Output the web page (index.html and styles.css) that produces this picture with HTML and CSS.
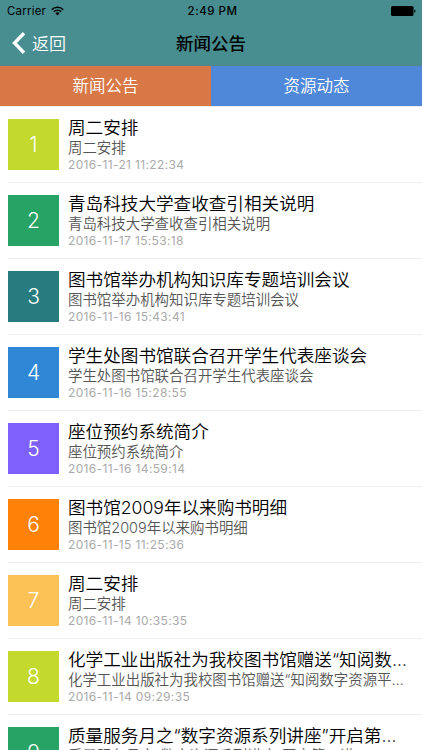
FILE: index.html
```html
<!DOCTYPE html>
<html lang="zh-CN">
  <head>
    <meta charset="UTF-8" />
    <title>新闻公告</title>
    <link rel="stylesheet" href="styles.css">
  </head>
  <body>
    <header class="header">
      <div class="status">
        <div class="status__carrier">
          Carrier
          <svg class="status__wifi" width="13" height="10" viewBox="0 0 13 10" fill="none" stroke="#000" stroke-width="1.5">
            <path d="M0.7 3.7a8.2 8.2 0 0 1 11.6 0" />
            <path d="M2.7 5.8a5.4 5.4 0 0 1 7.6 0" />
            <path d="M6.5 9.4L4.4 7.3a3 3 0 0 1 4.2 0z" fill="#000" stroke="none" />
          </svg>
        </div>
        <div class="status__time">2:49 PM</div>
        <svg class="status__battery" width="25" height="10" viewBox="0 0 25 10">
          <rect x="0" y="0" width="22.5" height="10" rx="1.5" />
          <path d="M23.3 3.2a1.9 1.9 0 0 1 0 3.6z" />
        </svg>
      </div>
      <div class="nav">
        <a class="nav__back" href="#">
          <svg width="14" height="22" viewBox="0 0 14 22" fill="none" stroke="#fff" stroke-width="3.4">
            <path d="M12 1.3L2.5 11L12 20.7" />
          </svg>
          <span class="nav__label">返回</span>
        </a>
        <h1 class="nav__title">新闻公告</h1>
      </div>
    </header>

    <div class="tabs">
      <a class="tabs__item tabs__item--active" href="#">新闻公告</a>
      <a class="tabs__item" href="#">资源动态</a>
    </div>

    <ul class="news">
      <li class="news__item">
        <div class="news__number news__number--lime">1</div>
        <div class="news__body">
          <div class="news__title">周二安排</div>
          <div class="news__text">周二安排</div>
          <div class="news__date">2016-11-21 11:22:34</div>
        </div>
      </li>
      <li class="news__item">
        <div class="news__number news__number--green">2</div>
        <div class="news__body">
          <div class="news__title">青岛科技大学查收查引相关说明</div>
          <div class="news__text">青岛科技大学查收查引相关说明</div>
          <div class="news__date">2016-11-17 15:53:18</div>
        </div>
      </li>
      <li class="news__item">
        <div class="news__number news__number--teal">3</div>
        <div class="news__body">
          <div class="news__title">图书馆举办机构知识库专题培训会议</div>
          <div class="news__text">图书馆举办机构知识库专题培训会议</div>
          <div class="news__date">2016-11-16 15:43:41</div>
        </div>
      </li>
      <li class="news__item">
        <div class="news__number news__number--blue">4</div>
        <div class="news__body">
          <div class="news__title">学生处图书馆联合召开学生代表座谈会</div>
          <div class="news__text">学生处图书馆联合召开学生代表座谈会</div>
          <div class="news__date">2016-11-16 15:28:55</div>
        </div>
      </li>
      <li class="news__item">
        <div class="news__number news__number--purple">5</div>
        <div class="news__body">
          <div class="news__title">座位预约系统简介</div>
          <div class="news__text">座位预约系统简介</div>
          <div class="news__date">2016-11-16 14:59:14</div>
        </div>
      </li>
      <li class="news__item">
        <div class="news__number news__number--orange">6</div>
        <div class="news__body">
          <div class="news__title">图书馆2009年以来购书明细</div>
          <div class="news__text">图书馆2009年以来购书明细</div>
          <div class="news__date">2016-11-15 11:25:36</div>
        </div>
      </li>
      <li class="news__item">
        <div class="news__number news__number--yellow">7</div>
        <div class="news__body">
          <div class="news__title">周二安排</div>
          <div class="news__text">周二安排</div>
          <div class="news__date">2016-11-14 10:35:35</div>
        </div>
      </li>
      <li class="news__item">
        <div class="news__number news__number--lime">8</div>
        <div class="news__body">
          <div class="news__title">化学工业出版社为我校图书馆赠送“知阅数字资源平台”账号</div>
          <div class="news__text">化学工业出版社为我校图书馆赠送“知阅数字资源平台”账号</div>
          <div class="news__date">2016-11-14 09:29:35</div>
        </div>
      </li>
      <li class="news__item">
        <div class="news__number news__number--green">9</div>
        <div class="news__body">
          <div class="news__title">质量服务月之“数字资源系列讲座”开启第一讲</div>
          <div class="news__text">质量服务月之“数字资源系列讲座”开启第一讲</div>
        </div>
      </li>
    </ul>
  </body>
</html>
```
FILE: styles.css
```css
* {
  box-sizing: border-box;
}

body {
  margin: 0;
  height: 750px;
  overflow: hidden;
  display: flex;
  flex-direction: column;
  background-color: #fff;
  color: #000;
  font-family: Inter, "Noto Sans CJK SC", sans-serif;
}

a {
  text-decoration: none;
}

.header {
  flex: none;
  height: 66px;
  background-color: #488d90;
  border-bottom: 1px solid #54858a;
}

.status {
  display: grid;
  grid-template-columns: 1fr auto 1fr;
  align-items: center;
  height: 22px;
  padding: 0 6px 0 7px;
  font-size: 11.5px;
}

.status__carrier {
  display: flex;
  align-items: center;
  gap: 5px;
  letter-spacing: 0.2px;
}

.status__time {
  padding-left: 2px;
  font-weight: 500;
  letter-spacing: 0.5px;
}

.status__battery {
  justify-self: end;
}

.nav {
  display: grid;
  grid-template-columns: 1fr auto 1fr;
  align-items: center;
  height: 42px;
  padding: 0 12px;
}

.nav__back {
  display: flex;
  align-items: center;
  gap: 6px;
  color: #fff;
  font-size: 17px;
  font-weight: 350;
}

.nav__label {
  padding-bottom: 2px;
}

.nav__title {
  margin: 0;
  padding-bottom: 2px;
  font-size: 17.5px;
  font-weight: 500;
}

.tabs {
  flex: none;
  display: flex;
  height: 41px;
  border-bottom: 1px solid #eee;
}

.tabs__item {
  flex: 1;
  line-height: 40px;
  text-align: center;
  color: #fff;
  background-color: #5088d9;
  font-size: 16.5px;
  font-weight: 350;
}

.tabs__item--active {
  background-color: #d87847;
}

.news {
  flex: 1;
  min-height: 0;
  overflow: hidden;
  margin: 0;
  padding: 0 0 0 8px;
  list-style: none;
}

.news__item {
  display: flex;
  gap: 9px;
  height: 76px;
  padding-top: 7px;
  border-bottom: 1px solid #ededf1;
}

.news__number {
  flex: none;
  width: 51px;
  height: 51px;
  margin-top: 5px;
  line-height: 51px;
  text-align: center;
  color: #fff;
  font-size: 21px;
  font-weight: 350;
}

.news__number--lime {
  background-color: #c3d92b;
}

.news__number--green {
  background-color: #27a465;
}

.news__number--teal {
  background-color: #277c80;
}

.news__number--blue {
  background-color: #2f87d6;
}

.news__number--purple {
  background-color: #7e61fb;
}

.news__number--orange {
  background-color: #ff8208;
}

.news__number--yellow {
  background-color: #fcc256;
}

.news__body {
  flex: 1;
  min-width: 0;
  padding-right: 11px;
}

.news__title,
.news__text {
  overflow: hidden;
  white-space: nowrap;
  text-overflow: ellipsis;
}

.news__title {
  line-height: 27px;
  font-size: 17.6px;
  font-weight: 350;
}

.news__text {
  margin-top: -4px;
  line-height: 22px;
  color: #555;
  font-size: 14.45px;
  font-weight: 350;
}

.news__date {
  margin-top: -2px;
  line-height: 15px;
  color: #aaa;
  font-size: 12px;
  letter-spacing: 0.35px;
}
```
